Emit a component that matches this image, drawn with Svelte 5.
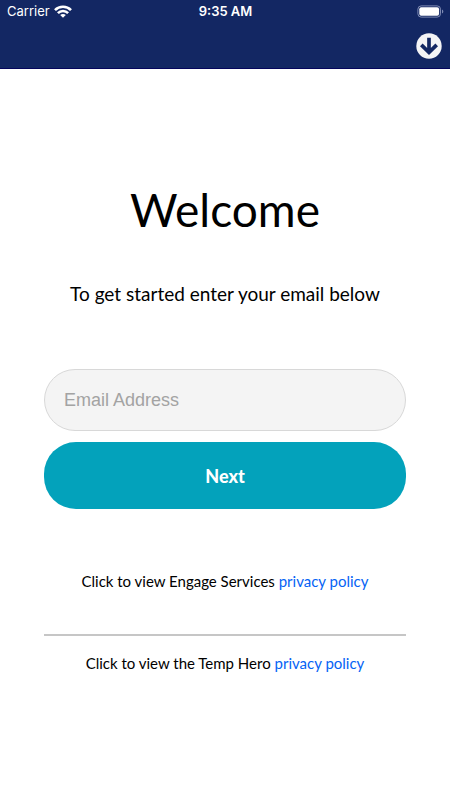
<script>
  let email = $state('');
</script>

<div class="screen">
  <header>
    <div class="status">
      <div class="carrier">
        <span>Carrier</span>
        <svg width="18" height="13" viewBox="0 0 18 13" fill="none" stroke="#fff" stroke-width="2.6" aria-hidden="true">
          <path d="M1 5.100C5.300.6 12.700.6 17 5.100" />
          <path d="M3.900 8.200C6.700 5.300 11.300 5.300 14.100 8.200" />
          <path d="M9 12.800 6.200 10C7.700 8.500 10.300 8.500 11.800 10Z" fill="#fff" stroke="none" />
        </svg>
      </div>
      <time>9:35 AM</time>
      <svg class="battery" width="27" height="13" viewBox="0 0 27 13" aria-hidden="true">
        <rect x=".9" y=".9" width="22.600" height="11.200" rx="3.300" fill="none" stroke="#7f8bb3" />
        <rect x="2.300" y="2.300" width="19.800" height="8.400" rx="1.900" fill="#fff" />
        <path d="M25 4.500C26.800 5.200 26.800 7.800 25 8.500Z" fill="#7f8bb3" />
      </svg>
    </div>
    <button class="download" type="button" aria-label="Download">
      <svg width="26" height="26" viewBox="0 0 26 26" aria-hidden="true">
        <circle cx="13" cy="13" r="12.700" fill="#f4f4f6" />
        <path d="M13 4.800V19M5.300 11.800 13 19.300 20.700 11.800" fill="none" stroke="#132763" stroke-width="3.700" />
      </svg>
    </button>
  </header>

  <main>
    <h1>Welcome</h1>
    <p class="intro">To get started enter your email below</p>
    <form onsubmit={(event) => event.preventDefault()}>
      <input type="email" placeholder="Email Address" aria-label="Email Address" bind:value={email} />
      <button class="next" type="submit">Next</button>
    </form>
    <p class="policy">Click to view Engage Services <a href="#engage-privacy">privacy policy</a></p>
    <hr />
    <p class="policy">Click to view the Temp Hero <a href="#temp-hero-privacy">privacy policy</a></p>
  </main>
</div>

<style>
  :global(body) {
    margin: 0;
    background: #fff;
  }

  .screen {
    min-height: 100vh;
    color: #000;
    font-family: Lato, sans-serif;
  }

  header {
    display: flex;
    flex-direction: column;
    box-sizing: border-box;
    height: 69px;
    background: #132763;
    border-bottom: 1px solid #05055c;
  }

  .status {
    display: grid;
    grid-template-columns: 1fr auto 1fr;
    align-items: center;
    height: 22px;
    padding: 0 6px 0 7px;
    color: #fff;
    font: 13px/22px Inter, Roboto, sans-serif;
  }

  .carrier {
    display: flex;
    align-items: center;
    gap: 4px;
  }

  time {
    font-weight: 600;
  }

  .battery {
    justify-self: end;
  }

  button {
    border: 0;
    cursor: pointer;
  }

  .download {
    align-self: flex-end;
    margin: 11px 8px 0 0;
    padding: 0;
    background: none;
  }

  .download svg {
    display: block;
  }

  main {
    padding: 111px 44px 40px;
    text-align: center;
  }

  h1 {
    margin: 0;
    font-size: 46px;
    font-weight: 400;
    line-height: 60px;
  }

  .intro {
    margin: 40px 0 0;
    font-size: 19px;
    line-height: 28px;
  }

  form {
    display: flex;
    flex-direction: column;
    gap: 11px;
    margin: 61px 0 60px;
  }

  input {
    box-sizing: border-box;
    width: 100%;
    height: 62px;
    padding: 0 19px;
    border: 1px solid #d8d8d8;
    border-radius: 31px;
    background: #f4f4f4;
    color: #000;
    font: 18px "Liberation Sans", sans-serif;
  }

  input::placeholder {
    color: #a3a3a3;
    opacity: 1;
  }

  .next {
    height: 67px;
    border-radius: 32px;
    background: #03a2bb;
    color: #fff;
    font: 900 18px Lato, sans-serif;
  }

  .policy {
    margin: 0;
    font-size: 15px;
    line-height: 24px;
  }

  a {
    color: #0563f5;
    text-decoration: none;
  }

  hr {
    height: 2px;
    margin: 41px 0 15px;
    border: 0;
    background: #c6c6c6;
  }
</style>
